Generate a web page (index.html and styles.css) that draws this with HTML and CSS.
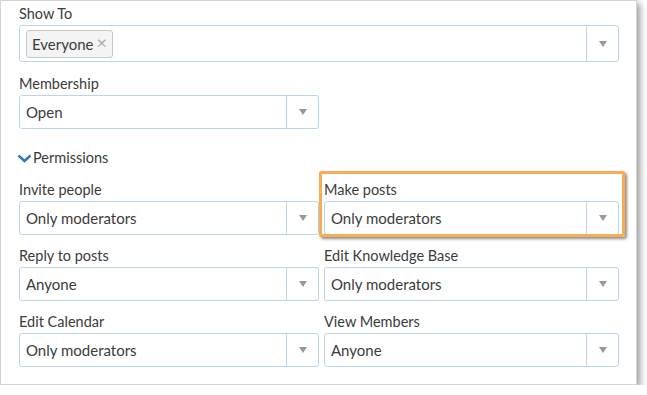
FILE: index.html
```html
<!DOCTYPE html>
<html>
<head>
  <title>Group Settings</title>
  <link rel="stylesheet" href="styles.css">
</head>
<body>
  <div class="panel">
    <div class="field">
      <label class="label">Show To</label>
      <div class="select select-wide">
        <div class="value">
          <span class="tag">Everyone<span class="tag-x">×</span></span>
        </div>
        <div class="arrow"><span class="caret"></span></div>
      </div>
    </div>

    <div class="field">
      <label class="label">Membership</label>
      <div class="select select-half">
        <div class="value">Open</div>
        <div class="arrow"><span class="caret"></span></div>
      </div>
    </div>

    <div class="toggle">
      <svg class="chevron" width="15" height="9" viewBox="0 0 15 9">
        <path d="M1.5 1.5 L7.5 7 L13.5 1.5" fill="none" stroke="#2b7bbd" stroke-width="2.4"/>
      </svg>
      <span>Permissions</span>
    </div>

    <div class="grid">
      <div class="cell">
        <label class="label">Invite people</label>
        <div class="select">
          <div class="value">Only moderators</div>
          <div class="arrow"><span class="caret"></span></div>
        </div>
      </div>
      <div class="cell highlight">
        <label class="label">Make posts</label>
        <div class="select">
          <div class="value">Only moderators</div>
          <div class="arrow"><span class="caret"></span></div>
        </div>
      </div>
      <div class="cell">
        <label class="label">Reply to posts</label>
        <div class="select">
          <div class="value">Anyone</div>
          <div class="arrow"><span class="caret"></span></div>
        </div>
      </div>
      <div class="cell">
        <label class="label">Edit Knowledge Base</label>
        <div class="select">
          <div class="value">Only moderators</div>
          <div class="arrow"><span class="caret"></span></div>
        </div>
      </div>
      <div class="cell">
        <label class="label">Edit Calendar</label>
        <div class="select">
          <div class="value">Only moderators</div>
          <div class="arrow"><span class="caret"></span></div>
        </div>
      </div>
      <div class="cell">
        <label class="label">View Members</label>
        <div class="select">
          <div class="value">Anyone</div>
          <div class="arrow"><span class="caret"></span></div>
        </div>
      </div>
    </div>
  </div>
</body>
</html>
```

FILE: styles.css
```css
body {
  margin: 0;
  background: #fff;
  font-family: 'Lato', 'Open Sans', sans-serif;
  color: #3b3b3b;
}

.panel {
  box-sizing: border-box;
  width: 637px;
  height: 385px;
  padding: 1px 18px 0 18px;
  background: #fff;
  border: 1px solid #d4d4d4;
  box-shadow: 3px 3px 7px rgba(0, 0, 0, 0.4);
}

.field {
  margin-bottom: 10px;
}

.label {
  display: block;
  height: 20px;
  line-height: 24px;
  font-size: 14.5px;
  margin-bottom: 3px;
}

.select {
  box-sizing: border-box;
  display: flex;
  height: 34px;
  border: 1px solid #bcd5ea;
  border-radius: 3px;
  background: #fff;
}

.select-wide {
  width: 600px;
  height: 37px;
}

.select-half {
  width: 300px;
}

.value {
  flex: 1;
  display: flex;
  align-items: center;
  padding-left: 6px;
  font-size: 15px;
}

.arrow {
  width: 31px;
  border-left: 1px solid #bcd5ea;
  display: flex;
  align-items: center;
  justify-content: center;
}

.caret {
  width: 0;
  height: 0;
  border-left: 4.5px solid transparent;
  border-right: 4.5px solid transparent;
  border-top: 6px solid #999;
}

.tag {
  display: flex;
  align-items: center;
  box-sizing: border-box;
  height: 28px;
  padding: 0 5px 0 5px;
  border: 1px solid #c9c9c9;
  border-radius: 3px;
  background: #f4f4f4;
  font-size: 15px;
}

.tag-x {
  margin-left: 3px;
  color: #aaa;
  font-size: 18px;
  line-height: 1;
  margin-top: -3px;
}

.toggle {
  display: flex;
  align-items: center;
  height: 20px;
  margin-top: 18px;
  margin-left: -2px;
  font-size: 14.5px;
}

.chevron {
  margin-right: 1px;
  margin-top: 2px;
}

.grid {
  display: grid;
  grid-template-columns: 300px 295px;
  column-gap: 5px;
  row-gap: 9px;
  margin-top: 11px;
}

.cell {
  position: relative;
}

.highlight::after {
  content: "";
  position: absolute;
  top: -7px;
  left: -5px;
  right: -6px;
  bottom: -2px;
  border: 3px solid #f8ad55;
  border-radius: 2px;
  box-shadow: 2px 2px 3px rgba(0, 0, 0, 0.45);
}
```
